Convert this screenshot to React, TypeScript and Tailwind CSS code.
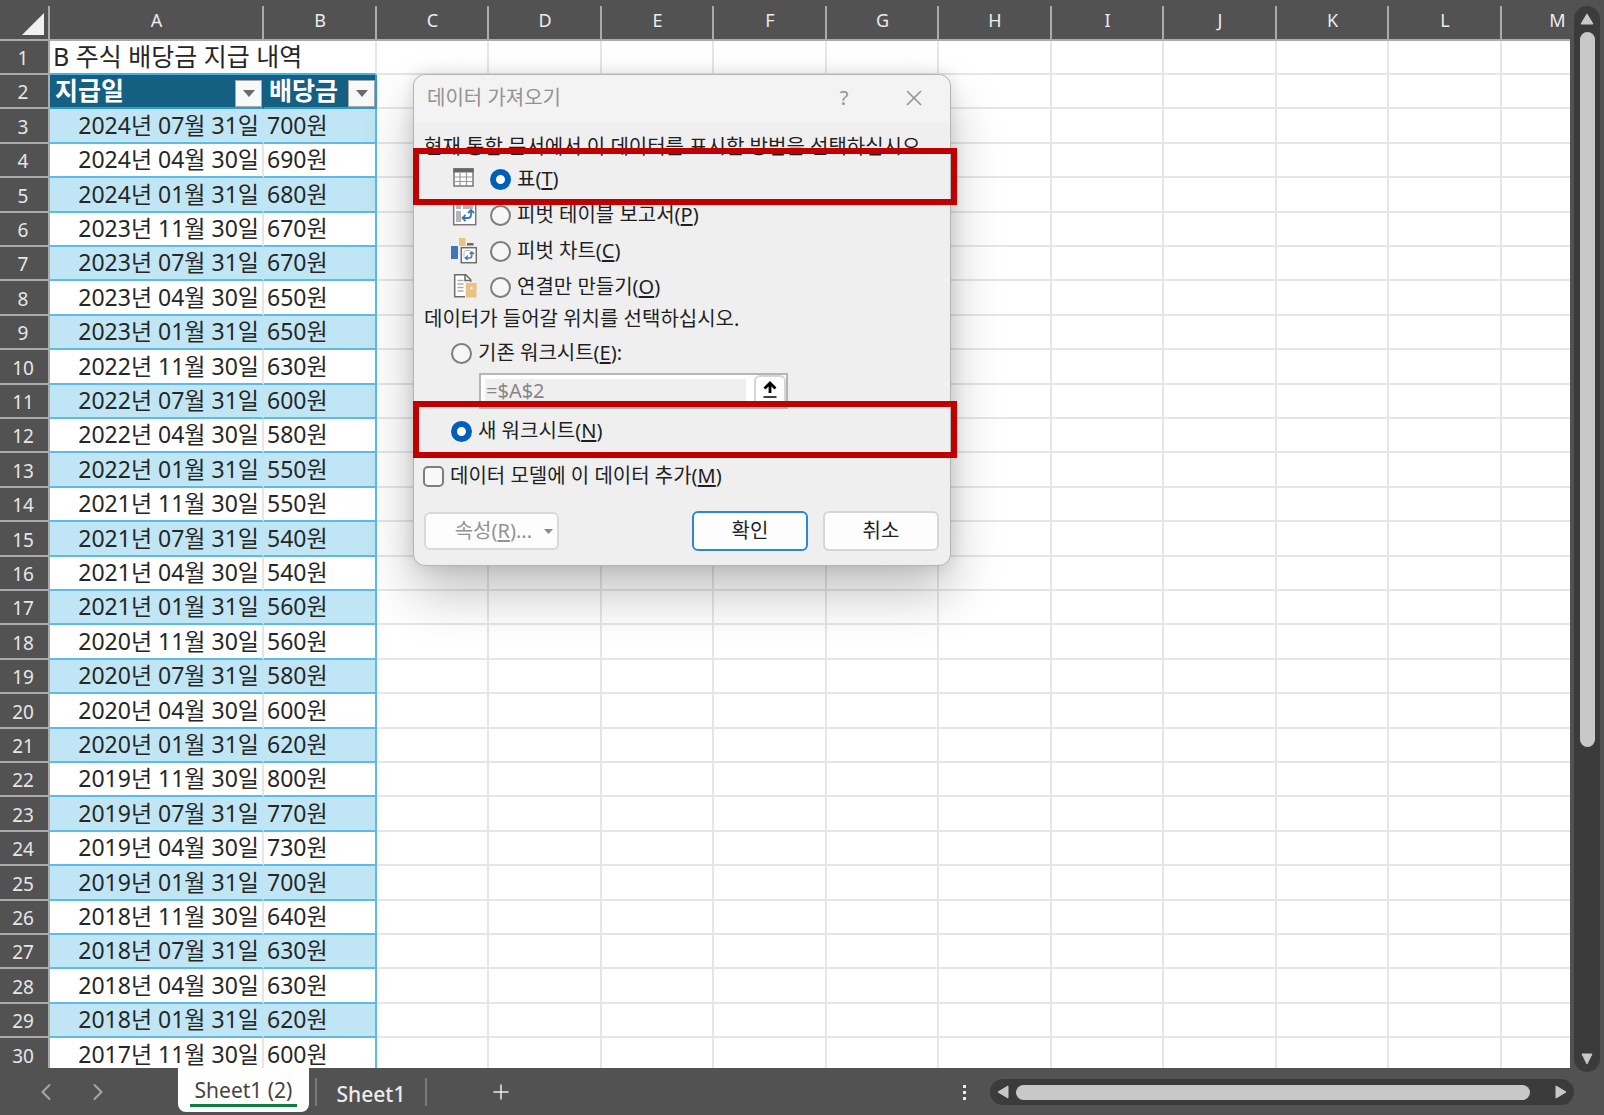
import { useState } from 'react'
import type { ReactNode } from 'react'
import { ChevronLeft, ChevronRight, Plus, X } from 'lucide-react'

const COLUMNS = ['C', 'D', 'E', 'F', 'G', 'H', 'I', 'J', 'K', 'L', 'M']

const DIVIDENDS: [string, number][] = [
  ['2024년 07월 31일', 700],
  ['2024년 04월 30일', 690],
  ['2024년 01월 31일', 680],
  ['2023년 11월 30일', 670],
  ['2023년 07월 31일', 670],
  ['2023년 04월 30일', 650],
  ['2023년 01월 31일', 650],
  ['2022년 11월 30일', 630],
  ['2022년 07월 31일', 600],
  ['2022년 04월 30일', 580],
  ['2022년 01월 31일', 550],
  ['2021년 11월 30일', 550],
  ['2021년 07월 31일', 540],
  ['2021년 04월 30일', 540],
  ['2021년 01월 31일', 560],
  ['2020년 11월 30일', 560],
  ['2020년 07월 31일', 580],
  ['2020년 04월 30일', 600],
  ['2020년 01월 31일', 620],
  ['2019년 11월 30일', 800],
  ['2019년 07월 31일', 770],
  ['2019년 04월 30일', 730],
  ['2019년 01월 31일', 700],
  ['2018년 11월 30일', 640],
  ['2018년 07월 31일', 630],
  ['2018년 04월 30일', 630],
  ['2018년 01월 31일', 620],
  ['2017년 11월 30일', 600],
]

// two rows out of every five are one pixel taller
function rowHeight(n: number) {
  return n % 5 === 3 || n % 5 === 0 ? 'h-[35px]' : 'h-[34px]'
}

function RowHeader({ n }: { n: number }) {
  return (
    <th
      scope="row"
      className="border-b-2 border-r-2 border-[#ababab] bg-[#525252] p-0 pt-0.5 pr-0.5 text-center text-[19px] leading-6 font-normal text-[#e6e6e6]"
    >
      {n}
    </th>
  )
}

function EmptyCells() {
  return (
    <>
      {COLUMNS.map((c) => (
        <td key={c} className="border-r-2 border-b-2 border-[#e6e6e6] p-0" />
      ))}
    </>
  )
}

function FilterHeader({ label }: { label: string }) {
  return (
    <div className="flex items-end justify-between pl-[5px]">
      <span className="pb-0.5 leading-[30px]">{label}</span>
      <button
        type="button"
        aria-label={`${label} 필터`}
        className="flex size-[27px] items-center justify-center border border-[#a6a6a6] bg-[#f7f8fa]"
      >
        <svg width="12" height="7" viewBox="0 0 12 7">
          <path d="M0 0h12L6 7z" fill="#6b6b6b" />
        </svg>
      </button>
    </div>
  )
}

function SheetGrid() {
  return (
    <table className="w-[1614px] table-fixed border-separate border-spacing-0 text-[23px] leading-7 text-[#262626]">
      <colgroup>
        <col className="w-[50px]" />
        <col className="w-[214px]" />
        <col className="w-[113px]" />
        {COLUMNS.map((c, i) => (
          <col key={c} className={i % 2 ? 'w-[113px]' : 'w-[112px]'} />
        ))}
      </colgroup>
      <thead>
        <tr className="h-[41px] bg-[#525252] text-[18px] text-[#ececec]">
          <th className="border-b-2 border-[#ababab] p-0">
            <div className="flex h-[39px] items-end justify-end">
              <svg width="22" height="33" viewBox="0 0 22 33" className="mr-1">
                <path d="M22 7v22H0z" fill="#f0f0f0" />
              </svg>
              <span className="h-[33px] w-0.5 bg-[#ababab]" />
            </div>
          </th>
          {['A', 'B', ...COLUMNS].map((c) => (
            <th key={c} scope="col" className="border-b-2 border-[#ababab] p-0 font-normal">
              <div className="flex h-[39px] items-end">
                <span className="flex-1 pb-[5px] pl-px text-center">{c}</span>
                <span className="h-[33px] w-0.5 bg-[#ababab]" />
              </div>
            </th>
          ))}
        </tr>
      </thead>
      <tbody>
        <tr className={rowHeight(1)}>
          <RowHeader n={1} />
          <td
            colSpan={2}
            className="border-r-2 border-b-2 border-r-[#e6e6e6] border-b-[#45b0e1] p-0 pb-0.5 pl-[3px] text-[25px]"
          >
            B 주식 배당금 지급 내역
          </td>
          <EmptyCells />
        </tr>
        <tr className={`${rowHeight(2)} text-[25px] text-white`}>
          <RowHeader n={2} />
          <td className="border-r-2 border-b-2 border-r-[#156082] border-b-[#2f9ccb] bg-[#156082] p-0 font-bold">
            <FilterHeader label="지급일" />
          </td>
          <td className="border-r-2 border-b-2 border-[#2f9ccb] bg-[#156082] p-0 font-bold">
            <FilterHeader label="배당금" />
          </td>
          <EmptyCells />
        </tr>
        {DIVIDENDS.map(([date, amount], i) => (
          <tr key={date} className={rowHeight(i + 3)}>
            <RowHeader n={i + 3} />
            <td
              className={
                i % 2
                  ? 'border-r-2 border-b-2 border-r-[#e6e6e6] border-b-[#5dbbe5] p-0 pr-[3px] pb-0.5 text-right'
                  : 'border-r-2 border-b-2 border-r-[#c0e6f5] border-b-[#5dbbe5] bg-[#c0e6f5] p-0 pr-[3px] pb-0.5 text-right'
              }
            >
              {date}
            </td>
            <td
              className={
                i % 2
                  ? 'border-r-2 border-b-2 border-[#5dbbe5] p-0 pb-0.5 pl-[3px]'
                  : 'border-r-2 border-b-2 border-[#5dbbe5] bg-[#c0e6f5] p-0 pb-0.5 pl-[3px]'
              }
            >
              {amount}원
            </td>
            <EmptyCells />
          </tr>
        ))}
      </tbody>
    </table>
  )
}

function TableIcon() {
  return (
    <svg width="26" height="26" viewBox="0 0 26 26">
      <rect x="3" y="3" width="19" height="17" fill="#fff" stroke="#777" strokeWidth="1.5" />
      <path d="M2.3 2.300h20.400v4.200H2.300z" fill="#666" />
      <path d="M9 6.500V20M15.500 6.500V20M3 11h19M3 15.500h19" stroke="#999" strokeWidth="1.2" />
    </svg>
  )
}

function SwapArrows() {
  return (
    <path
      d="M0 8.500h5.500a3 3 0 0 0 3-3V1M3 5.500l-3 3 3 3M5.500 3.500l3-3 3 3"
      fill="none"
      stroke="#3b78b5"
      strokeWidth="1.8"
    />
  )
}

function PivotTableIcon() {
  return (
    <svg width="26" height="26" viewBox="0 0 26 26">
      <rect x="2.700" y="0.700" width="22" height="22" fill="#fff" stroke="#777" strokeWidth="1.5" />
      <path d="M5 3h5v4H5zM12 3h10v4H12zM5 9h5v11H5z" fill="#b5b5b5" />
      <g transform="translate(11.500 7.500)">
        <SwapArrows />
      </g>
    </svg>
  )
}

function PivotChartIcon() {
  return (
    <svg width="26" height="26" viewBox="0 0 26 26">
      <path d="M0 8h7v13H0z" fill="#3b78b5" />
      <path d="M8 0h6.500v8H8z" fill="#ecc07e" />
      <path d="M16 5h6.500v2.500H16z" fill="#6b6b6b" />
      <rect x="10.300" y="9.700" width="15" height="15" fill="#fff" stroke="#6b6b6b" strokeWidth="1.500" />
      <rect x="13" y="12.500" width="7" height="8" rx="2" fill="none" stroke="#bbb" />
      <g transform="translate(14.500 13.500) scale(.75)">
        <SwapArrows />
      </g>
    </svg>
  )
}

function ConnectionIcon() {
  return (
    <svg width="26" height="26" viewBox="0 0 26 26">
      <path d="M3.700 0.700h11l5 5v17h-16z" fill="#fff" stroke="#6b6b6b" strokeWidth="1.500" />
      <path d="M14 0.500v6h6" fill="none" stroke="#6b6b6b" strokeWidth="1.500" />
      <path d="M6.500 6.500h6M6.500 10h6M6.500 13.500h6M6.500 17h6" stroke="#aaa" strokeWidth="1.300" />
      <path d="M14.500 8.500H26v15.500H14.500z" fill="#ecc07e" stroke="#efefef" />
      <circle cx="20.500" cy="14" r="1.200" fill="#fff" />
    </svg>
  )
}

const VIEW_OPTIONS: { id: string; label: string; accessKey: string; icon: ReactNode }[] = [
  { id: 'table', label: '표', accessKey: 'T', icon: <TableIcon /> },
  { id: 'pivot', label: '피벗 테이블 보고서', accessKey: 'P', icon: <PivotTableIcon /> },
  { id: 'chart', label: '피벗 차트', accessKey: 'C', icon: <PivotChartIcon /> },
  { id: 'connection', label: '연결만 만들기', accessKey: 'O', icon: <ConnectionIcon /> },
]

const radioClass =
  'size-[21px] shrink-0 appearance-none rounded-full border-2 border-[#7d7d7d] bg-[#f6f6f6] checked:border-[6px] checked:border-[#005fb8] checked:bg-white'

function Mnemonic({ letter }: { letter: string }) {
  return (
    <>
      (<span className="underline underline-offset-2">{letter}</span>)
    </>
  )
}

function ImportDialog() {
  const [view, setView] = useState('table')
  const [place, setPlace] = useState('new')
  const [addToModel, setAddToModel] = useState(false)

  return (
    <div
      role="dialog"
      aria-labelledby="import-title"
      className="absolute top-[74px] left-[413px] w-[538px] rounded-xl border border-[#b4b4b4] bg-[#efefef] text-[20px] leading-7 text-[#1f1f1f] shadow-[0_28px_52px_rgba(0,0,0,0.24),0_0_16px_rgba(0,0,0,0.12)]"
    >
      <div className="flex h-12 items-center rounded-t-xl bg-[#f3f3f3] pb-[3px] pl-[13px] text-[#929292]">
        <h2 id="import-title" className="flex-1">
          데이터 가져오기
        </h2>
        <button type="button" aria-label="도움말" className="w-10 text-center">
          ?
        </button>
        <button type="button" aria-label="닫기" className="mr-[22px] ml-9 flex w-7 justify-center">
          <X size={26} strokeWidth={1.5} />
        </button>
      </div>

      <form className="pt-2.5 pr-[11px] pb-3.5 pl-2.5" onSubmit={(e) => e.preventDefault()}>
        <p className="whitespace-nowrap">현재 통합 문서에서 이 데이터를 표시할 방법을 선택하십시오.</p>
        <div className="pl-[27px]">
          {VIEW_OPTIONS.map((o) => (
            <label key={o.id} className="flex h-9 items-center">
              {o.icon}
              <input
                type="radio"
                name="view"
                className={`${radioClass} mr-1.5 ml-[13px]`}
                checked={view === o.id}
                onChange={() => setView(o.id)}
              />
              <span>
                {o.label}
                <Mnemonic letter={o.accessKey} />
              </span>
            </label>
          ))}
        </div>

        <p>데이터가 들어갈 위치를 선택하십시오.</p>
        <div className="pl-[27px]">
          <label className="flex h-10 items-center gap-1.5">
            <input
              type="radio"
              name="place"
              className={radioClass}
              checked={place === 'existing'}
              onChange={() => setPlace('existing')}
            />
            <span>
              기존 워크시트
              <Mnemonic letter="E" />:
            </span>
          </label>
          <div className="ml-7 flex h-9 w-[309px] border-2 border-[#b5b5bb] bg-white">
            <input
              type="text"
              aria-label="셀 참조"
              disabled
              defaultValue="=$A$2"
              className="my-1 ml-1 w-[261px] min-w-0 bg-[#efefef] pl-px text-[#858585]"
            />
            <button
              type="button"
              aria-label="범위 선택"
              className="ml-auto flex w-8 items-center justify-center rounded-md border-2 border-[#d6d6d6] bg-white pb-0.5"
            >
              <svg width="14" height="18" viewBox="0 0 14 18">
                <path d="M7 12V2M1.500 7.500L7 2l5.500 5.500" fill="none" stroke="#000" strokeWidth="2.800" />
                <path d="M.5 16h13" stroke="#000" strokeWidth="1.500" />
              </svg>
            </button>
          </div>
          <label className="flex h-11 items-center gap-1.5">
            <input
              type="radio"
              name="place"
              className={radioClass}
              checked={place === 'new'}
              onChange={() => setPlace('new')}
            />
            <span>
              새 워크시트
              <Mnemonic letter="N" />
            </span>
          </label>
        </div>

        <label className="-ml-px flex h-[46px] items-center gap-1.5">
          <input
            type="checkbox"
            className="size-[21px] appearance-none rounded-[5px] border-2 border-[#7d7d7d] bg-[#f8f8f8] checked:bg-[#005fb8]"
            checked={addToModel}
            onChange={(e) => setAddToModel(e.target.checked)}
          />
          <span>
            데이터 모델에 이 데이터 추가
            <Mnemonic letter="M" />
          </span>
        </label>

        <div className="mt-3 flex h-10 items-center gap-[15px]">
          <button
            type="button"
            disabled
            className="mr-auto flex h-[38px] w-[135px] items-center justify-end gap-3 rounded-md border-2 border-[#d9d9d9] bg-[#fdfdfd] pr-1 text-[#929292]"
          >
            <span>
              속성
              <Mnemonic letter="R" />
              ...
            </span>
            <svg width="9" height="5" viewBox="0 0 9 5">
              <path d="M0 0h9L4.500 5z" fill="#8a8a8a" />
            </svg>
          </button>
          <button type="submit" className="h-10 w-[116px] rounded-md border-2 border-[#2b88d8] bg-[#fdfdfd]">
            확인
          </button>
          <button type="button" className="h-10 w-[116px] rounded-md border-2 border-[#d6d6d6] bg-[#fdfdfd]">
            취소
          </button>
        </div>
      </form>

      <div className="pointer-events-none absolute top-[73px] -left-px h-[57px] w-[544px] border-[6px] border-[#c00000]" />
      <div className="pointer-events-none absolute top-[326px] -left-px h-[57px] w-[544px] border-[6px] border-[#c00000]" />
    </div>
  )
}

function VerticalScrollbar() {
  return (
    <div className="relative -mb-1 flex w-[34px] shrink-0 flex-col bg-[#525252] pt-1.5 pl-1">
      <div className="flex w-[26px] flex-1 flex-col items-center rounded-full bg-[#3b3b3b] py-[7px]">
        <button type="button" aria-label="위로">
          <svg width="14" height="12" viewBox="0 0 14 12" className="block">
            <path d="M7 1l6 10H1z" fill="#c8c8c8" stroke="#c8c8c8" strokeLinejoin="round" />
          </svg>
        </button>
        <div className="mt-[7px] w-[15px] grow-[7] rounded-full bg-[#c8c8c8]" />
        <div className="grow-[3]" />
        <button type="button" aria-label="아래로">
          <svg width="12" height="12" viewBox="0 0 12 12" className="block">
            <path d="M1 1h10L6 11z" fill="#c8c8c8" stroke="#c8c8c8" strokeLinejoin="round" />
          </svg>
        </button>
      </div>
    </div>
  )
}

function SheetBar() {
  return (
    <div className="flex h-[47px] shrink-0 items-start bg-[#525252] text-[21px] text-[#ececec]">
      <div className="flex h-12 w-[178px] items-center gap-6 pl-8 text-[#a6a6a6]">
        <button type="button" aria-label="이전 시트">
          <ChevronLeft size={28} strokeWidth={1.75} />
        </button>
        <button type="button" aria-label="다음 시트">
          <ChevronRight size={28} strokeWidth={1.75} />
        </button>
      </div>
      <button
        type="button"
        className="flex h-11 w-[131px] flex-col items-center rounded-b-lg bg-white px-3 pt-2 text-[#444]"
      >
        <span className="leading-7">Sheet1 (2)</span>
        <span className="h-[3px] w-full bg-[#107c41]" />
      </button>
      <div className="flex h-12 items-center">
        <span className="ml-1.5 h-7 w-0.5 bg-[#7a7a7a]" />
        <button type="button" className="w-[108px] pt-1.5 font-medium">
          Sheet1
        </button>
        <span className="h-7 w-0.5 bg-[#7a7a7a]" />
        <button type="button" aria-label="새 시트" className="ml-[62px]">
          <Plus size={24} strokeWidth={1.5} />
        </button>
      </div>
      <div className="ml-auto flex h-12 items-center pr-[30px]">
        <div className="mr-6 flex flex-col gap-[3px]">
          <span className="size-[3px] bg-[#ececec]" />
          <span className="size-[3px] bg-[#ececec]" />
          <span className="size-[3px] bg-[#ececec]" />
        </div>
        <div className="flex h-[26px] w-[584px] items-center rounded-full bg-[#3b3b3b] px-[7px]">
          <button type="button" aria-label="왼쪽으로">
            <svg width="12" height="14" viewBox="0 0 12 14" className="block">
              <path d="M1 7l10-6v12z" fill="#c8c8c8" stroke="#c8c8c8" strokeLinejoin="round" />
            </svg>
          </button>
          <div className="mr-[25px] ml-[7px] h-[15px] flex-1 rounded-full bg-[#c8c8c8]" />
          <button type="button" aria-label="오른쪽으로">
            <svg width="12" height="14" viewBox="0 0 12 14" className="block">
              <path d="M11 7L1 1v12z" fill="#c8c8c8" stroke="#c8c8c8" strokeLinejoin="round" />
            </svg>
          </button>
        </div>
      </div>
    </div>
  )
}

export default function App() {
  return (
    <div className="relative flex h-screen flex-col overflow-hidden bg-[#525252] font-['Noto_Sans','Noto_Sans_CJK_KR',sans-serif]">
      <main className="flex min-h-0 flex-1">
        <div className="min-w-0 flex-1 overflow-hidden bg-white">
          <SheetGrid />
        </div>
        <VerticalScrollbar />
      </main>
      <SheetBar />
      <ImportDialog />
    </div>
  )
}
